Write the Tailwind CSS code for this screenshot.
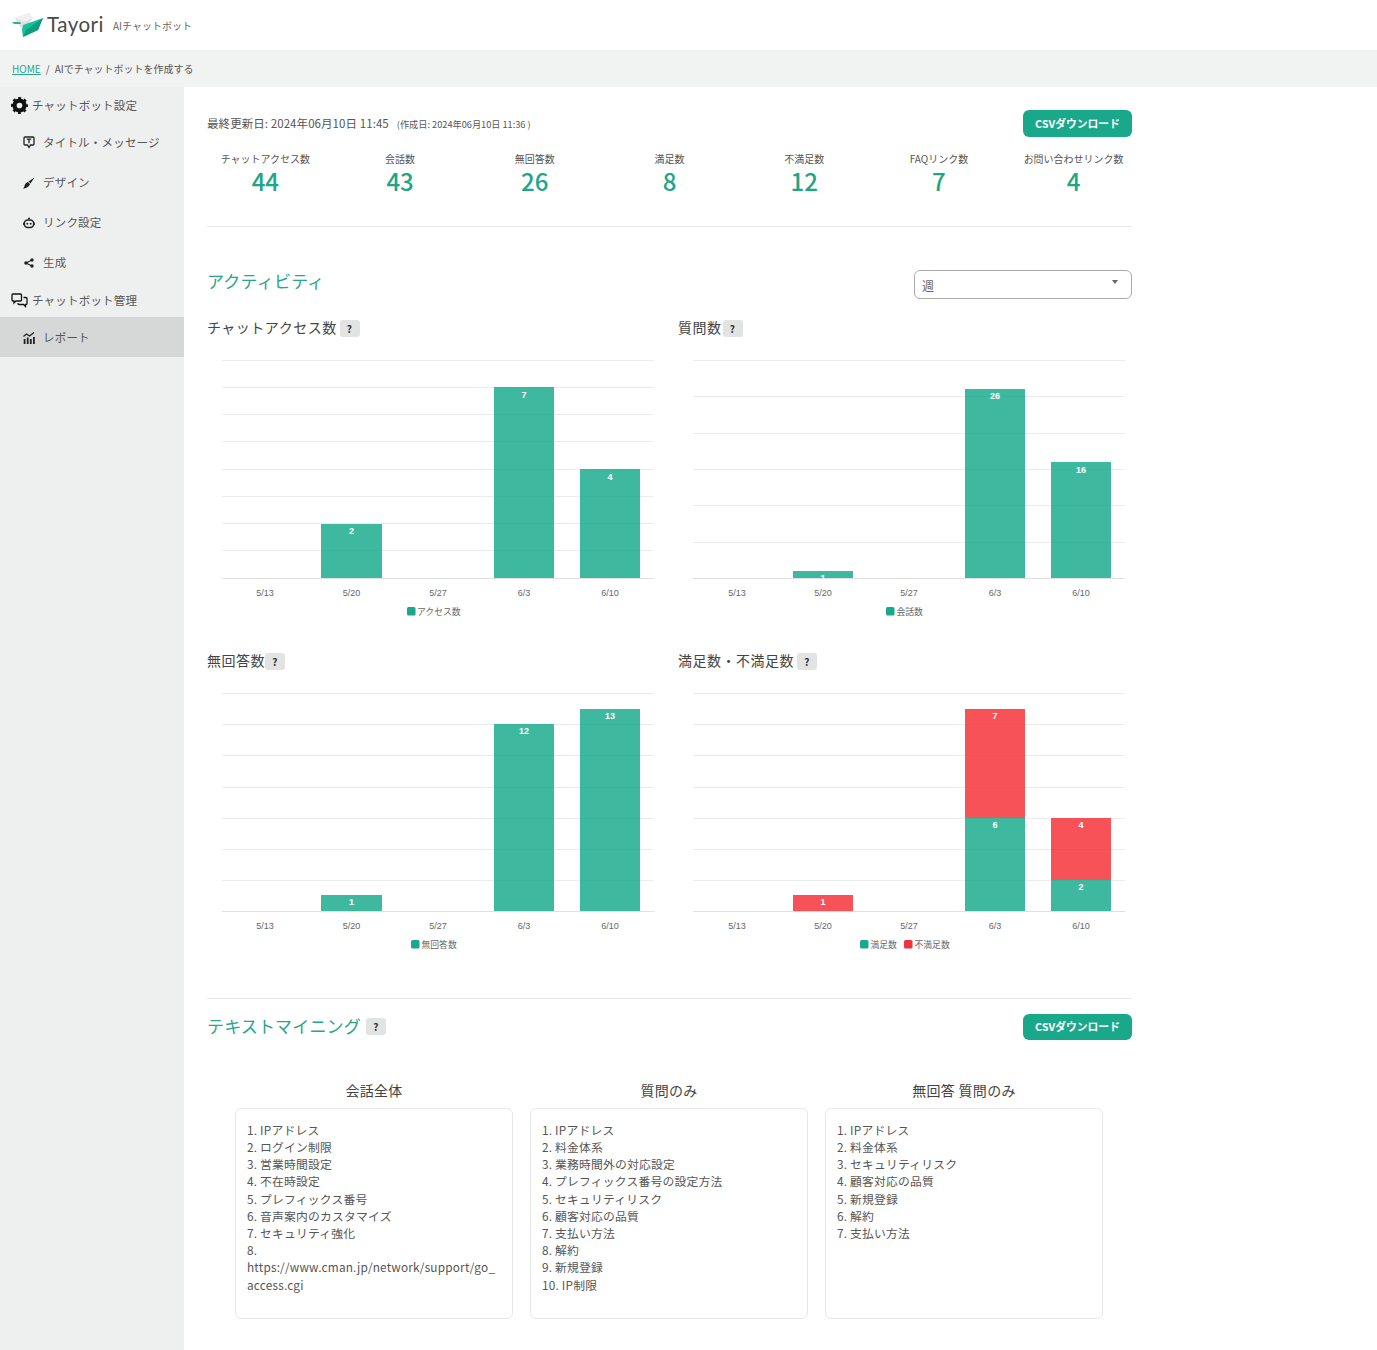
<!DOCTYPE html>
<html lang="ja">
<head>
<meta charset="utf-8">
<title>Tayori AIチャットボット レポート</title>
<script src="https://cdn.jsdelivr.net/npm/@tailwindcss/browser@4"></script>
</head>
<body class="bg-white font-['Noto_Sans_CJK_JP','Noto_Sans',sans-serif] text-[#555]">
<div class="h-[1350px] overflow-hidden flex flex-col">
  <header class="h-[50px] bg-white flex items-center pl-3 shrink-0">
    <svg class="w-[32px] h-[24px]" viewBox="0 0 32 24">
      <path d="M3 5 L17 0 L21 5 L11 18 Z" fill="#dfe1e0"/>
      <path d="M3 5 L17 0 L21 5 L12 9 Z" fill="#f0f1f0"/>
      <path d="M0 9 H8 L9 11 H2 Z" fill="#1fb797"/>
      <path d="M31 5 L11 12 L10 17 L11 24 L26 17 Z" fill="#12c39c"/>
      <path d="M31 5 L14 17 L11 24 L26 17 Z" fill="#119b80"/>
    </svg>
    <span class="ml-[3px] mb-[2px] font-['Lato'] text-[20.500px] leading-none tracking-[0.5px] text-[#4a4a4a]">Tayori</span>
    <span class="ml-[9px] text-[10px] text-[#666]">AIチャットボット</span>
  </header>
  <nav class="h-[37px] bg-[#f1f3f3] flex items-center pl-3 text-[10px] shrink-0">
    <a class="text-[#2aa58a] underline">HOME</a><span class="mx-[5px]">/</span><span>AIでチャットボットを作成する</span>
  </nav>
  <div class="flex flex-1 min-h-0">
    <aside class="w-[184px] bg-[#eef0f0] shrink-0 text-[11.500px] tracking-[0.2px]">
      <div class="h-[35px] pt-[2px] flex items-center pl-[11px] gap-[4px]">
        <svg class="w-[17px] h-[17px]" viewBox="0 0 24 24" fill="none" stroke="#111"><circle cx="12" cy="12" r="7" stroke-width="6"/><circle cx="12" cy="12" r="10.500" stroke-width="3" stroke-dasharray="4.120 4.120" stroke-dashoffset="2.060"/></svg>
        <span>チャットボット設定</span>
      </div>
      <div class="h-[40px] pt-[1px] flex items-center pl-[23px] gap-[8px]">
        <svg class="w-[12px] h-[13px]" viewBox="0 0 12 13" fill="none" stroke="#222" stroke-width="1.3"><path d="M2 1h8a1 1 0 0 1 1 1v6a1 1 0 0 1-1 1H7.500L6 11.500 4.500 9H2a1 1 0 0 1-1-1V2a1 1 0 0 1 1-1z"/><path d="M3.800 3.200h4.400M6 3.200v4"/></svg>
        <span>タイトル・メッセージ</span>
      </div>
      <div class="h-[40px] pt-[1px] flex items-center pl-[23px] gap-[8px]">
        <svg class="w-[12px] h-[12px]" viewBox="0 0 12 12" fill="#222"><path d="M11.500 .5 L7.500 6.500 L5.500 4.500 Z"/><path d="M5 5 L7 7 C6.500 9.500 3 11.500 0 11.500 C1.500 10 1.500 8.500 2 7.500 C2.500 6.500 3.500 5.500 5 5Z"/></svg>
        <span>デザイン</span>
      </div>
      <div class="h-[40px] pt-[1px] flex items-center pl-[23px] gap-[8px]">
        <svg class="w-[12px] h-[12px]" viewBox="0 0 12 12"><rect x="1.300" y="3" width="9.400" height="7.500" rx="3.500" fill="none" stroke="#222" stroke-width="1.500"/><circle cx="6" cy="1.500" r="1" fill="#222"/><circle cx="4.300" cy="6.700" r="1" fill="#222"/><circle cx="7.700" cy="6.700" r="1" fill="#222"/><path d="M.3 5.500v2.500M11.700 5.500v2.500" stroke="#222"/></svg>
        <span>リンク設定</span>
      </div>
      <div class="h-[40px] pt-[1px] flex items-center pl-[23px] gap-[8px]">
        <svg class="w-[12px] h-[12px]" viewBox="0 0 12 12" fill="#222"><circle cx="3" cy="6" r="1.800"/><circle cx="9" cy="3" r="1.700"/><circle cx="9" cy="9" r="1.700"/><path d="M3 6l6-3M3 6l6 3" stroke="#222" stroke-width="1.100"/></svg>
        <span>生成</span>
      </div>
      <div class="h-[35px] pt-[2px] flex items-center pl-[11px] gap-[4px]">
        <svg class="w-[17px] h-[15px]" viewBox="0 0 17 15" fill="none" stroke="#111" stroke-width="1.300"><path d="M2 1h7.500a1 1 0 0 1 1 1v5a1 1 0 0 1-1 1H5L3 10V8H2a1 1 0 0 1-1-1V2a1 1 0 0 1 1-1z"/><path d="M12.500 4.500H15a1 1 0 0 1 1 1v5a1 1 0 0 1-1 1h-.5v2l-2-2H8a1 1 0 0 1-1-1V10"/></svg>
        <span>チャットボット管理</span>
      </div>
      <div class="h-[40px] pt-[1px] bg-[#d6d8d8] flex items-center pl-[23px] gap-[8px]">
        <svg class="w-[12px] h-[12px]" viewBox="0 0 12 12" fill="#222"><path d="M.7 7h1.800v5H.7zM3.800 5.500h1.800V12H3.800zM6.900 7h1.800v5H6.900zM10 5h1.800v7H10z"/><path d="M.5 4.500 3.500 2l3 2L11 .5" fill="none" stroke="#222" stroke-width="1.300"/></svg>
        <span>レポート</span>
      </div>
    </aside>
    <main class="w-[948px] pl-[23px] pr-0 shrink-0">
      <div class="w-[925px]">
        <div class="pt-[23px] flex items-center justify-between h-[50px]">
          <div class="flex items-baseline">
            <span class="text-[11.500px] tracking-[0.07px]">最終更新日: 2024年06月10日 11:45</span>
            <span class="ml-[8px] text-[9.200px]">(作成日: 2024年06月10日 11:36 )</span>
          </div>
          <button class="w-[109px] h-[27px] rounded-[6px] bg-[#1aa88a] text-white text-[10.800px] font-bold">CSVダウンロード</button>
        </div>
        <div class="grid grid-cols-7 mx-[-9px] mt-[14px] h-[75px] text-center">
          <div class="flex flex-col items-center"><span class="text-[10px] leading-[15px]">チャットアクセス数</span><span class="text-[24px] font-medium leading-[30px] text-[#20a586]">44</span></div>
          <div class="flex flex-col items-center"><span class="text-[10px] leading-[15px]">会話数</span><span class="text-[24px] font-medium leading-[30px] text-[#20a586]">43</span></div>
          <div class="flex flex-col items-center"><span class="text-[10px] leading-[15px]">無回答数</span><span class="text-[24px] font-medium leading-[30px] text-[#20a586]">26</span></div>
          <div class="flex flex-col items-center"><span class="text-[10px] leading-[15px]">満足数</span><span class="text-[24px] font-medium leading-[30px] text-[#20a586]">8</span></div>
          <div class="flex flex-col items-center"><span class="text-[10px] leading-[15px]">不満足数</span><span class="text-[24px] font-medium leading-[30px] text-[#20a586]">12</span></div>
          <div class="flex flex-col items-center"><span class="text-[10px] leading-[15px]">FAQリンク数</span><span class="text-[24px] font-medium leading-[30px] text-[#20a586]">7</span></div>
          <div class="flex flex-col items-center"><span class="text-[10px] leading-[15px]">お問い合わせリンク数</span><span class="text-[24px] font-medium leading-[30px] text-[#20a586]">4</span></div>
        </div>
        <div class="border-t border-[#e6e8e8]"></div>

        <div class="mt-[41px] h-[30px] flex items-center justify-between">
          <h2 class="mb-[4px] text-[17px] tracking-[0.2px] text-[#2aa58a]">アクティビティ</h2>
          <div class="w-[218px] h-[29px] border border-[#aaa] rounded-[6px] flex items-center justify-between pl-[7px] pr-[13px] text-[12px] relative top-[1px]">
            <span class="text-[#666] mt-[3px]">週</span>
            <span class="w-0 h-0 border-x-[3.500px] border-x-transparent border-t-[4px] border-t-[#666] mb-[4px]"></span>
          </div>
        </div>

        <div class="grid grid-cols-2 gap-x-[17px] mt-[14px]">
          <section class="h-[333px]">
            <div class="h-[30px] flex items-center text-[14px] tracking-[0.5px] text-[#444]">チャットアクセス数<span class="ml-[3px] w-[20px] h-[17px] bg-[#e2e3e3] rounded-[3px] flex items-center justify-center text-[10px] font-bold text-[#333] mt-[2px]">?</span></div>
            <svg class="block mt-[8px]" width="454" height="275" viewBox="0 0 454 275" font-family="'Liberation Sans','Noto Sans CJK JP',sans-serif">
              <g stroke="#ececec" stroke-width="1"><path d="M15 10.500H447M15 37.500H447M15 64.500H447M15 91.500H447M15 119.500H447M15 146.500H447M15 173.500H447M15 200.500H447"/></g>
              <path d="M15 228.500H447" stroke="#e0e0e0"/>
              <g fill="#0ea888" fill-opacity=".8"><rect x="114" y="174" width="61" height="54"/><rect x="287" y="37" width="60" height="191"/><rect x="373" y="119" width="60" height="109"/></g>
              <g fill="#fff" font-size="9" font-weight="700" text-anchor="middle"><text x="144.500" y="184">2</text><text x="317" y="47.500">7</text><text x="403" y="129.500">4</text></g>
              <g fill="#666" font-size="9" text-anchor="middle"><text x="58" y="246">5/13</text><text x="144.500" y="246">5/20</text><text x="231" y="246">5/27</text><text x="317" y="246">6/3</text><text x="403" y="246">6/10</text></g>
              <rect x="200" y="257" width="8.500" height="8.500" rx="1.500" fill="#1aa88a"/><text x="210" y="264.500" font-size="8.800" fill="#666">アクセス数</text>
            </svg>
          </section>
          <section class="h-[333px]">
            <div class="h-[30px] flex items-center text-[14px] tracking-[0.5px] text-[#444]">質問数<span class="ml-[1px] w-[20px] h-[17px] bg-[#e2e3e3] rounded-[3px] flex items-center justify-center text-[10px] font-bold text-[#333] mt-[2px]">?</span></div>
            <svg class="block mt-[8px]" width="454" height="275" viewBox="0 0 454 275" font-family="'Liberation Sans','Noto Sans CJK JP',sans-serif">
              <g stroke="#ececec"><path d="M15 10.500H447M15 46.500H447M15 83.500H447M15 119.500H447M15 155.500H447M15 192.500H447"/></g>
              <path d="M15 228.500H447" stroke="#e0e0e0"/>
              <g fill="#0ea888" fill-opacity=".8"><rect x="115" y="221" width="60" height="7"/><rect x="287" y="39" width="60" height="189"/><rect x="373" y="112" width="60" height="116"/></g>
              <g fill="#fff" font-size="9" font-weight="700" text-anchor="middle"><text x="145" y="231">1</text><text x="317" y="49">26</text><text x="403" y="122.500">16</text></g>
              <g fill="#666" font-size="9" text-anchor="middle"><text x="59" y="246">5/13</text><text x="145" y="246">5/20</text><text x="231" y="246">5/27</text><text x="317" y="246">6/3</text><text x="403" y="246">6/10</text></g>
              <rect x="208" y="257" width="8.500" height="8.500" rx="1.500" fill="#1aa88a"/><text x="218.500" y="264.500" font-size="8.800" fill="#666">会話数</text>
            </svg>
          </section>
          <section class="h-[333px]">
            <div class="h-[30px] flex items-center text-[14px] tracking-[0.5px] text-[#444]">無回答数<span class="w-[20px] h-[17px] bg-[#e2e3e3] rounded-[3px] flex items-center justify-center text-[10px] font-bold text-[#333] mt-[2px]">?</span></div>
            <svg class="block mt-[8px]" width="454" height="275" viewBox="0 0 454 275" font-family="'Liberation Sans','Noto Sans CJK JP',sans-serif">
              <g stroke="#ececec"><path d="M15 10.500H447M15 41.500H447M15 72.500H447M15 104.500H447M15 135.500H447M15 166.500H447M15 197.500H447"/></g>
              <path d="M15 228.500H447" stroke="#e0e0e0"/>
              <g fill="#0ea888" fill-opacity=".8"><rect x="114" y="212" width="61" height="16"/><rect x="287" y="41" width="60" height="187"/><rect x="373" y="26" width="60" height="202"/></g>
              <g fill="#fff" font-size="9" font-weight="700" text-anchor="middle"><text x="144.500" y="222">1</text><text x="317" y="51">12</text><text x="403" y="36">13</text></g>
              <g fill="#666" font-size="9" text-anchor="middle"><text x="58" y="246">5/13</text><text x="144.500" y="246">5/20</text><text x="231" y="246">5/27</text><text x="317" y="246">6/3</text><text x="403" y="246">6/10</text></g>
              <rect x="204" y="257" width="8.500" height="8.500" rx="1.500" fill="#1aa88a"/><text x="214.500" y="264.500" font-size="8.800" fill="#666">無回答数</text>
            </svg>
          </section>
          <section class="h-[333px]">
            <div class="h-[30px] flex items-center text-[14px] tracking-[0.5px] text-[#444]">満足数・不満足数<span class="ml-[3px] w-[20px] h-[17px] bg-[#e2e3e3] rounded-[3px] flex items-center justify-center text-[10px] font-bold text-[#333] mt-[2px]">?</span></div>
            <svg class="block mt-[8px]" width="454" height="275" viewBox="0 0 454 275" font-family="'Liberation Sans','Noto Sans CJK JP',sans-serif">
              <g stroke="#ececec"><path d="M15 10.500H447M15 41.500H447M15 72.500H447M15 104.500H447M15 135.500H447M15 166.500H447M15 197.500H447"/></g>
              <path d="M15 228.500H447" stroke="#e0e0e0"/>
              <g fill="#0ea888" fill-opacity=".8"><rect x="287" y="135" width="60" height="93"/><rect x="373" y="197" width="60" height="31"/></g>
              <g fill="#f4343b" fill-opacity=".85"><rect x="115" y="212" width="60" height="16"/><rect x="287" y="26" width="60" height="109"/><rect x="373" y="135" width="60" height="62"/></g>
              <g fill="#fff" font-size="9" font-weight="700" text-anchor="middle"><text x="145" y="222">1</text><text x="317" y="36">7</text><text x="317" y="145">6</text><text x="403" y="145">4</text><text x="403" y="207">2</text></g>
              <g fill="#666" font-size="9" text-anchor="middle"><text x="59" y="246">5/13</text><text x="145" y="246">5/20</text><text x="231" y="246">5/27</text><text x="317" y="246">6/3</text><text x="403" y="246">6/10</text></g>
              <rect x="182" y="257" width="8.500" height="8.500" rx="1.500" fill="#1aa88a"/><text x="192.500" y="264.500" font-size="8.800" fill="#666">満足数</text>
              <rect x="226" y="257" width="8.500" height="8.500" rx="1.500" fill="#ef3340"/><text x="236.500" y="264.500" font-size="8.800" fill="#666">不満足数</text>
            </svg>
          </section>
        </div>

        <div class="border-t border-[#e6e8e8] mt-[20px]"></div>
        <div class="mt-[14px] h-[27px] flex items-center justify-between">
          <h2 class="flex items-center mb-[2px] text-[17px] tracking-[0.15px] text-[#2aa58a]">テキストマイニング<span class="ml-[5px] w-[20px] h-[17px] bg-[#e2e3e3] rounded-[3px] flex items-center justify-center text-[10px] font-bold tracking-normal text-[#333] mt-[2px]">?</span></h2>
          <button class="w-[109px] h-[26px] rounded-[6px] bg-[#1aa88a] text-white text-[10.800px] font-bold">CSVダウンロード</button>
        </div>

        <div class="grid grid-cols-3 gap-x-[17px] ml-[28px] mr-[29px] mt-[38px]">
          <div>
            <h3 class="h-[30px] text-center text-[14px] leading-[25px] tracking-[0.3px] text-[#444]">会話全体</h3>
            <div class="h-[211px] border border-[#e6e8e8] rounded-[6px] px-[11px] pt-[11.700px] text-[11.800px] leading-[17.200px] tracking-[0.2px]">
              <div>1. IPアドレス</div><div>2. ログイン制限</div><div>3. 営業時間設定</div><div>4. 不在時設定</div><div>5. プレフィックス番号</div><div>6. 音声案内のカスタマイズ</div><div>7. セキュリティ強化</div><div>8.</div><div>https://www.cman.jp/network/support/go_</div><div>access.cgi</div>
            </div>
          </div>
          <div>
            <h3 class="h-[30px] text-center text-[14px] leading-[25px] tracking-[0.3px] text-[#444]">質問のみ</h3>
            <div class="h-[211px] border border-[#e6e8e8] rounded-[6px] px-[11px] pt-[11.700px] text-[11.800px] leading-[17.200px] tracking-[0.2px]">
              <div>1. IPアドレス</div><div>2. 料金体系</div><div>3. 業務時間外の対応設定</div><div>4. プレフィックス番号の設定方法</div><div>5. セキュリティリスク</div><div>6. 顧客対応の品質</div><div>7. 支払い方法</div><div>8. 解約</div><div>9. 新規登録</div><div>10. IP制限</div>
            </div>
          </div>
          <div>
            <h3 class="h-[30px] text-center text-[14px] leading-[25px] tracking-[0.3px] text-[#444]">無回答 質問のみ</h3>
            <div class="h-[211px] border border-[#e6e8e8] rounded-[6px] px-[11px] pt-[11.700px] text-[11.800px] leading-[17.200px] tracking-[0.2px]">
              <div>1. IPアドレス</div><div>2. 料金体系</div><div>3. セキュリティリスク</div><div>4. 顧客対応の品質</div><div>5. 新規登録</div><div>6. 解約</div><div>7. 支払い方法</div>
            </div>
          </div>
        </div>
      </div>
    </main>
  </div>
</div>
</body>
</html>
